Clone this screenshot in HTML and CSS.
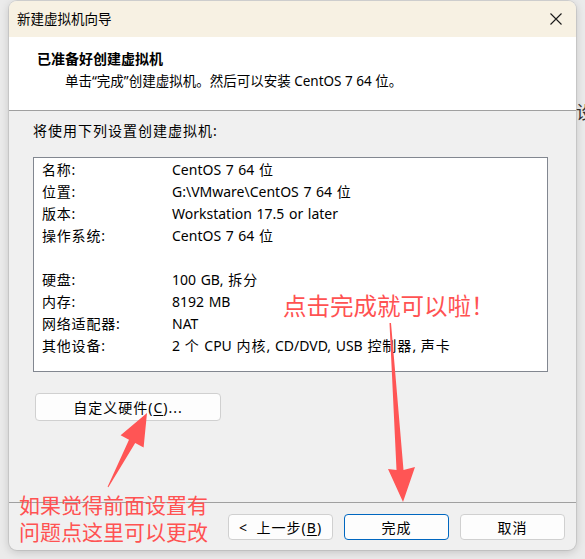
FILE: index.html
```html
<!DOCTYPE html>
<html lang="zh-CN">
  <head>
    <meta charset="UTF-8" />
    <meta name="viewport" content="width=device-width, initial-scale=1.0" />
    <title>新建虚拟机向导</title>
    <link rel="stylesheet" href="styles.css">
  </head>
  <body>
    <div class="backdrop-text">设</div>

    <div class="window">
      <div class="titlebar">
        <span class="title">新建虚拟机向导</span>
        <svg class="close" width="12" height="12" viewBox="0 0 12 12">
          <path d="M0.5 0.5 L11.5 11.5 M11.5 0.5 L0.5 11.5" stroke="#1a1a1a" stroke-width="1.1" fill="none" />
        </svg>
      </div>

      <div class="header">
        <div class="header-title">已准备好创建虚拟机</div>
        <div class="header-sub">单击“完成”创建虚拟机。然后可以安装 CentOS 7 64 位。</div>
      </div>

      <div class="content">
        <p class="intro">将使用下列设置创建虚拟机:</p>

        <div class="summary">
          <div class="row"><span class="label">名称:</span><span class="value">CentOS 7 64 <span class="cjk">位</span></span></div>
          <div class="row"><span class="label">位置:</span><span class="value">G:\VMware\CentOS 7 64 <span class="cjk">位</span></span></div>
          <div class="row"><span class="label">版本:</span><span class="value">Workstation 17.5 or later</span></div>
          <div class="row"><span class="label">操作系统:</span><span class="value">CentOS 7 64 <span class="cjk">位</span></span></div>
          <div class="row"></div>
          <div class="row"><span class="label">硬盘:</span><span class="value">100 GB, <span class="cjk">拆分</span></span></div>
          <div class="row"><span class="label">内存:</span><span class="value">8192 MB</span></div>
          <div class="row"><span class="label">网络适配器:</span><span class="value">NAT</span></div>
          <div class="row">
            <span class="label">其他设备:</span>
            <span class="value">2 <span class="cjk">个</span> CPU <span class="cjk">内核</span>, CD/DVD, USB <span class="cjk">控制器</span>, <span class="cjk">声卡</span></span>
          </div>
        </div>

        <button class="btn btn-custom">自定义硬件(<u>C</u>)...</button>
      </div>

      <div class="footer">
        <button class="btn btn-back">&lt; 上一步(<u>B</u>)</button>
        <button class="btn btn-primary">完成</button>
        <button class="btn">取消</button>
      </div>
    </div>

    <div class="note note-finish">点击完成就可以啦！</div>
    <div class="note note-custom">如果觉得前面设置有<br />问题点这里可以更改</div>

    <svg class="arrows" width="585" height="559" viewBox="0 0 585 559">
      <polygon
        fill="#ff5555"
        points="107.6,486.8 129,439.7 120.6,435.2 147,413 143.6,447.4 135.2,442.9 108.4,487.2"
      />
      <polygon
        fill="#ff5555"
        points="389.5,323 396.5,470 388,469 403,502 415,467 403.5,470 391,323"
      />
    </svg>
  </body>
</html>
```

FILE: styles.css
```css
* {
  margin: 0;
  padding: 0;
  box-sizing: border-box;
}

body {
  font-family: "Noto Sans", "Noto Sans CJK SC", sans-serif;
  font-size: 14px;
  color: #000;
  background-color: #ebebeb;
  width: 585px;
  height: 559px;
  overflow: hidden;
  position: relative;
}

.backdrop-text {
  position: absolute;
  left: 576px;
  top: 98px;
  font-size: 18px;
  color: #333;
}

.window {
  position: relative;
  margin: 1px 0 0 9px;
  width: 567px;
  height: 549px;
  display: flex;
  flex-direction: column;
  background-color: #f0f0f0;
  border-radius: 8px;
  overflow: hidden;
  box-shadow: 0 2px 10px rgba(0, 0, 0, 0.18), 0 0 0 1px rgba(0, 0, 0, 0.08);
}

.titlebar {
  height: 36px;
  display: flex;
  align-items: center;
  justify-content: space-between;
  padding: 0 14px 0 8px;
  background-color: #f7f1e3;
}

.title {
  font-size: 13.5px;
  line-height: 20px;
}

.header {
  height: 74px;
  background-color: #fff;
  border-bottom: 1px solid #a0a0a0;
  padding: 12px 0 0 28px;
}

.header-title {
  font-weight: bold;
  line-height: 20px;
}

.header-sub {
  margin-top: 2px;
  padding-left: 28px;
  font-size: 13.5px;
  line-height: 20px;
}

.content {
  flex: 1;
  padding: 10px 28px 0 24px;
}

.intro {
  line-height: 20px;
  letter-spacing: 1px;
}

.summary {
  margin-top: 16px;
  height: 215px;
  background-color: #fff;
  border: 1px solid #828790;
  padding: 1px 8px 0;
}

.row {
  display: grid;
  grid-template-columns: 130px 1fr;
  height: 22px;
  line-height: 22px;
  white-space: nowrap;
}

.label {
  letter-spacing: 0.8px;
}

.value {
  word-spacing: 1px;
}

.cjk {
  letter-spacing: 1px;
}

.btn {
  font-family: inherit;
  font-size: 14px;
  letter-spacing: 1px;
  color: #000;
  height: 26px;
  width: 105px;
  background-color: #fdfdfd;
  border: 1px solid #d0d0d0;
  border-radius: 4px;
}

.btn u {
  text-underline-offset: 2px;
}

.btn-back {
  word-spacing: 4px;
}

.btn-custom {
  margin: 21px 0 0 2px;
  width: 186px;
  height: 28px;
}

.btn-primary {
  border-color: #0067c0;
}

.footer {
  border-top: 1px solid #a0a0a0;
  display: flex;
  justify-content: flex-end;
  gap: 11px;
  padding: 11px 11px 10px 0;
}

.note {
  position: absolute;
  color: #ff5252;
  font-family: "Noto Sans CJK SC", sans-serif;
  white-space: nowrap;
}

.note-finish {
  left: 283px;
  top: 290px;
  font-size: 23.5px;
  line-height: 30px;
}

.note-custom {
  left: 19px;
  top: 491px;
  font-size: 21px;
  line-height: 27px;
}

.arrows {
  position: absolute;
  left: 0;
  top: 0;
  pointer-events: none;
}
```
